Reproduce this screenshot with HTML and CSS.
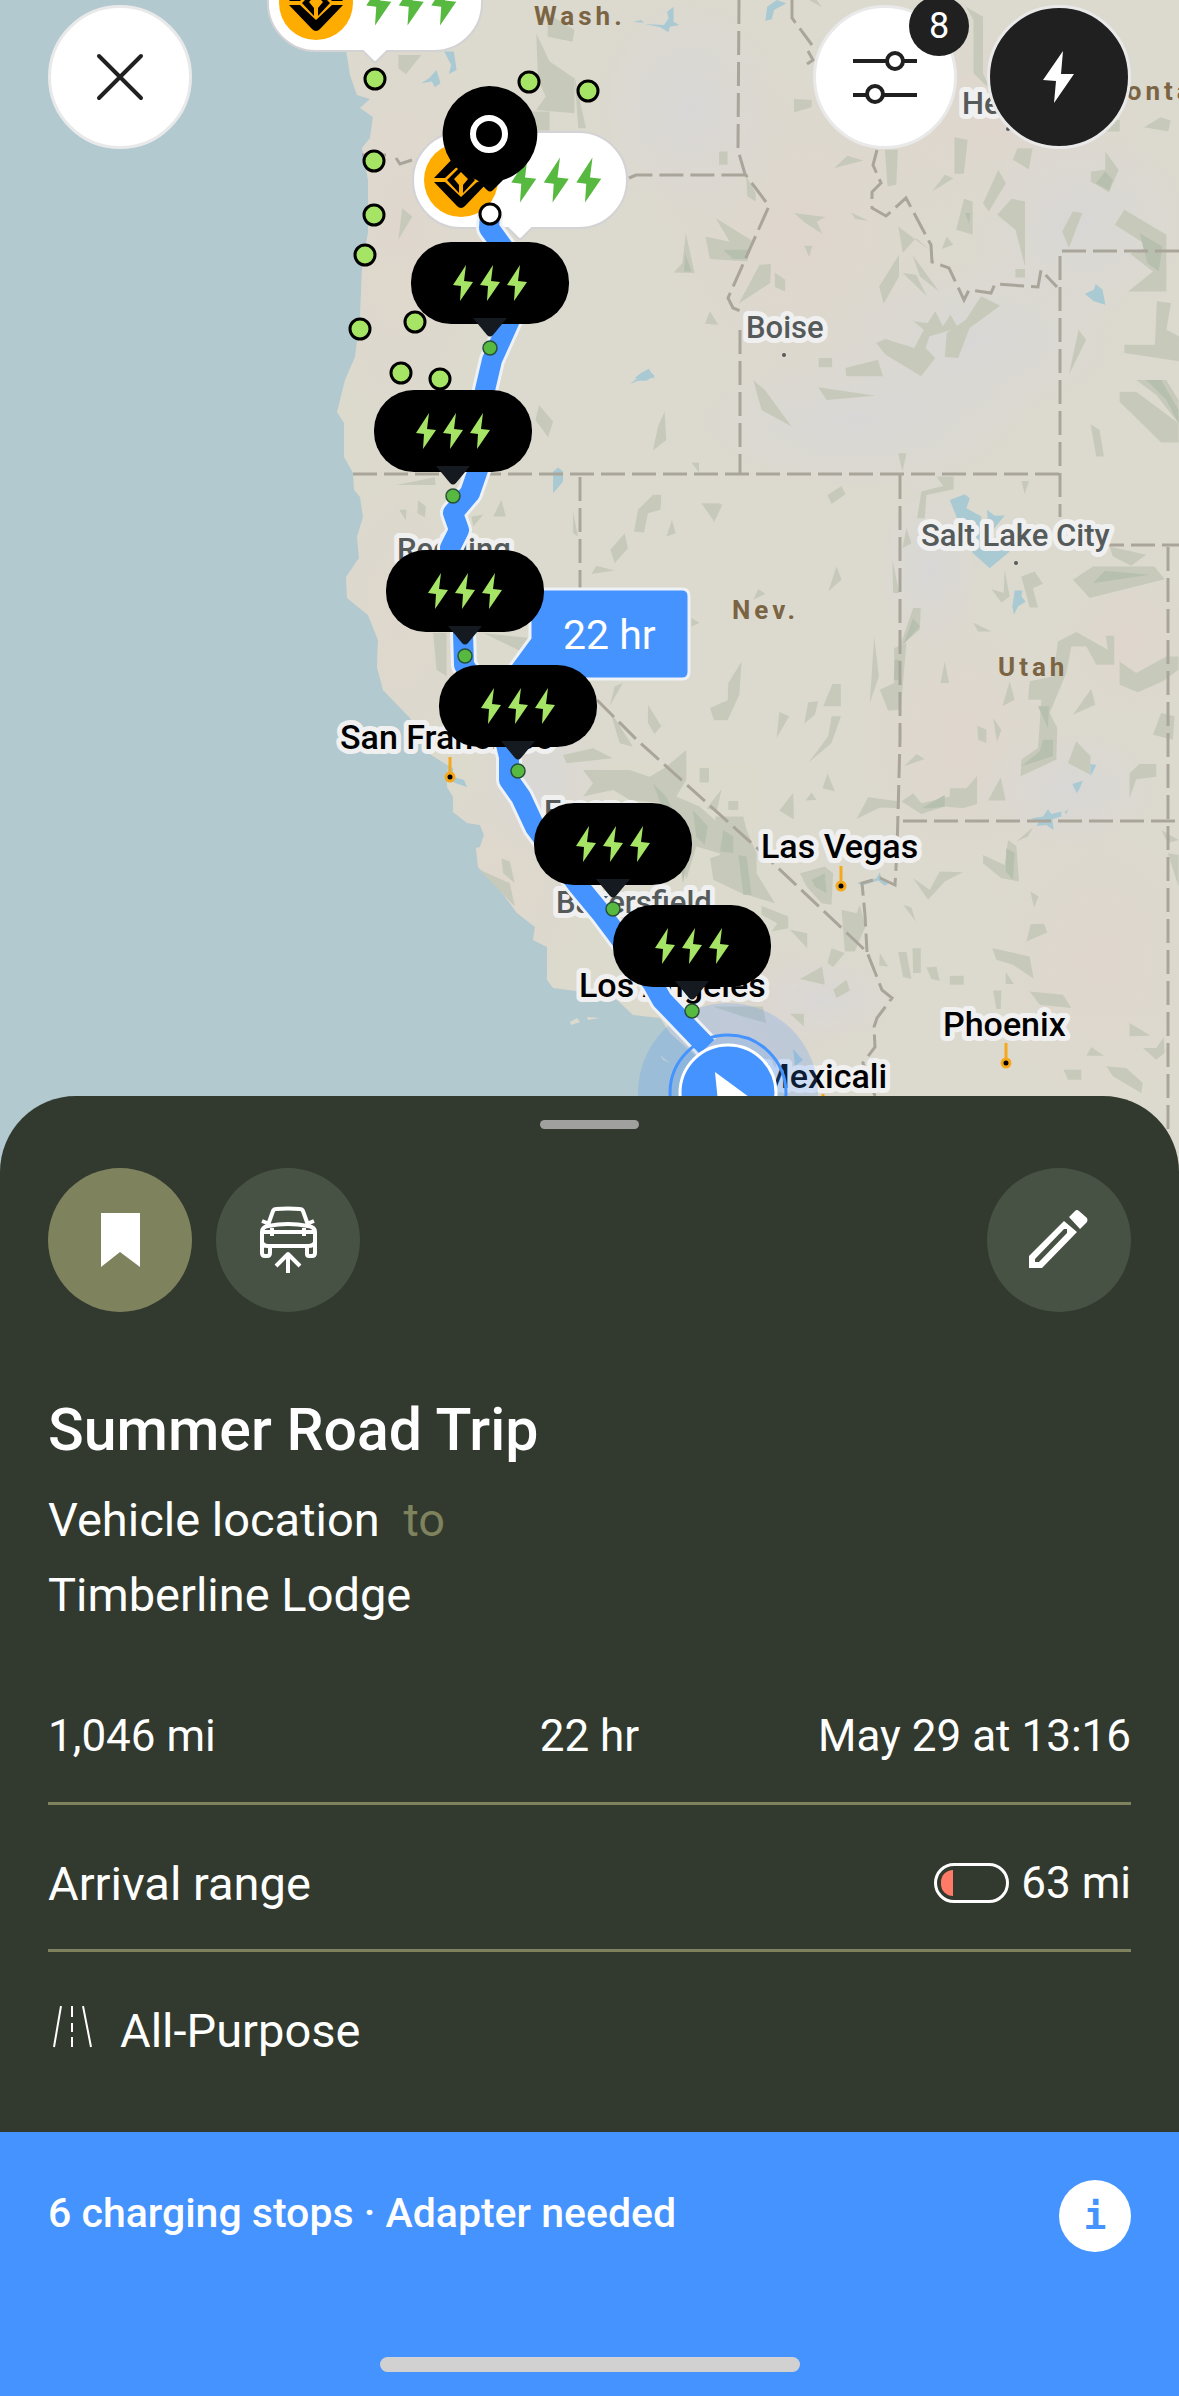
FILE: index.html
```html
<!DOCTYPE html>
<html lang="en">
<head>
    <meta charset="UTF-8">
    <meta name="viewport" content="width=device-width, initial-scale=1.0">
    <title>Summer Road Trip</title>
    <link rel="stylesheet" href="styles.css">
</head>
<body>
    <main class="map-area">
        <svg class="map" viewBox="0 0 1179 1196" preserveAspectRatio="xMidYMin slice" role="img" aria-label="Route map">
            <defs>
                <path id="bolt" d="M3 -18 L-10 2 L-2 3 L-3 18 L10 -1 L1 -2 Z"/>
                <g id="stop">
                    <rect x="-79" y="-106" width="158" height="82" rx="40"/>
                    <path d="M-17 -30 H17 L3 -13 Q0 -10 -3 -13 Z" fill="#141a1f"/>
                    <g fill="#a6e465">
                        <use href="#bolt" x="-27" y="-65"/>
                        <use href="#bolt" y="-65"/>
                        <use href="#bolt" x="27" y="-65"/>
                    </g>
                    <circle r="7" fill="#57b940" stroke="#27503a" stroke-width="1.5"/>
                </g>
                <g id="charger">
                    <path d="M-59 -48 H59 A48 48 0 0 1 59 48 H12 L2 58 Q0 60 -2 58 L-12 48 H-59 A48 48 0 0 1 -59 -48 Z" fill="#fff" stroke="#d3d2d4" stroke-width="2"/>
                    <circle cx="-59" r="37" fill="#ffac00"/>
                    <g transform="translate(-59 0)">
                        <path d="M-27 2 H-16 L0 17 L16 2 H27 L4 26 Q0 30 -4 26 Z M-27 -2 H-16 L0 -17 L16 -2 H27 L4 -26 Q0 -30 -4 -26 Z"/>
                        <path d="M0 -14 L14 0 L2 13 V5 L7 -1 L0 -8 L-7 -1 L-2 5 V13 L-14 0 Z"/>
                    </g>
                    <g fill="#57b940" transform="scale(1.25)">
                        <use href="#bolt" x="3"/>
                        <use href="#bolt" x="29"/>
                        <use href="#bolt" x="55"/>
                    </g>
                </g>
                <path id="coast" d="M340 0 L346 50 L350 75 L357 95 L370 99 L360 108 L373 117 L370 138 L362 148 L368 180 L368 233 L362 267 L360 317 L355 357 L345 380 L337 412 L344 423 L344 457 L353 473 L354 490 L360 497 L363 517 L357 537 L359 558 L346 577 L347 598 L368 615 L378 640 L377 667 L383 690 L410 718 L428 753 L447 765 L447 787 L453 797 L453 812 L467 823 L480 825 L484 835 L480 847 L476 848 L478 867 L500 890 L517 913 L535 927 L533 940 L547 947 L547 980 L553 988 L583 992 L617 1000 L633 1015 L660 1018 L670 1033 L697 1057 L720 1100 L740 1196 H1179 V0 Z"/>
                <clipPath id="on-land"><use href="#coast"/></clipPath>
                <radialGradient id="pink"><stop offset="0" stop-color="#e0d6cd"/><stop offset="1" stop-color="#e0d6cd" stop-opacity="0"/></radialGradient>
                <radialGradient id="lilac"><stop offset="0" stop-color="#d9d7d8"/><stop offset="1" stop-color="#d9d7d8" stop-opacity="0"/></radialGradient>
            </defs>

            <rect width="1179" height="1196" fill="#b2c9cf"/>
            <use class="land" href="#coast"/>
            <path class="land" d="M570 1022 L577 1018 L580 1022 L571 1025 Z M587 1017 L600 1018 L588 1020 Z M660 1055 L670 1063 L663 1060 Z"/>

            <!-- soft ground tints -->
            <g clip-path="url(#on-land)" opacity=".8">
                <g fill="url(#pink)">
                    <ellipse cx="400" cy="230" rx="110" ry="260"/>
                    <ellipse cx="400" cy="620" rx="90" ry="180"/>
                    <ellipse cx="800" cy="230" rx="180" ry="200"/>
                    <ellipse cx="1000" cy="120" rx="180" ry="120"/>
                    <ellipse cx="500" cy="880" rx="110" ry="150"/>
                    <ellipse cx="960" cy="740" rx="130" ry="170"/>
                    <ellipse cx="1100" cy="960" rx="130" ry="170"/>
                    <ellipse cx="760" cy="1010" rx="120" ry="100"/>
                    <ellipse cx="1130" cy="640" rx="90" ry="100"/>
                </g>
                <g fill="url(#lilac)">
                    <ellipse cx="690" cy="110" rx="110" ry="130"/>
                    <ellipse cx="860" cy="420" rx="190" ry="80"/>
                    <ellipse cx="930" cy="570" rx="60" ry="100"/>
                    <ellipse cx="970" cy="340" rx="170" ry="90"/>
                    <ellipse cx="1080" cy="220" rx="130" ry="110"/>
                    <ellipse cx="1070" cy="790" rx="100" ry="70"/>
                    <ellipse cx="540" cy="780" rx="70" ry="80"/>
                    <ellipse cx="820" cy="1000" rx="90" ry="50"/>
                </g>
            </g>

            <!-- hills -->
            <g class="hills">
                <path transform="scale(.383 .333)" d="M1040 165 H1100 L1060 223 L1040 205Z M1400 100 L1435 185 L1500 235 V340 L1400 330 L1425 290 L1405 240Z M1430 40 L1500 90 L1495 125 L1430 110Z M1500 230 L1530 385 H1510Z M1050 625 L1077 650 L1040 720Z M1380 335 H1435 V392 H1370Z"/>
                <path transform="translate(580 0) scale(.382 .333)" d="M560 297 L607 300 L606 322 L560 338Z M665 505 L700 468 L742 482Z M364 455 H386 V495 H364Z M435 528 L460 580 V605 L438 590Z M355 655 L450 722 L438 785 L340 778 L328 710 L392 726Z M277 700 L300 820 L245 818 L268 790Z M415 912 L470 795 L500 793 L498 850Z M510 818 L537 840 V875 L510 862Z M340 935 L362 975 L327 972Z M980 412 L1015 420 L1005 522 H980Z M798 450 H832 L828 555 L805 560Z M922 575 L955 525 L978 535Z M1095 510 L1115 550 L1070 635 L1055 610Z M1005 597 L1028 605 V705 L985 690Z M1130 597 L1165 605 V800 L1140 690 L1092 645Z M1375 455 L1410 510 L1385 577 L1337 545 L1338 515 L1375 510Z M1477 382 L1520 352 L1546 362 L1540 395Z M1290 635 L1315 640 L1280 745 L1262 695Z M1425 630 L1535 705 V875 H1435 L1500 815 L1440 762 L1490 740 L1400 675Z M833 680 L920 755 L880 715 L845 760Z M835 765 V830 L795 912 L783 860Z M870 765 L940 875 L890 830Z M845 820 L908 890 L880 825Z M560 640 L643 652 L620 665 L634 702 L590 670Z M710 638 L755 663 L720 658Z M587 738 H608 L600 772Z M960 710 L977 735 L947 748Z M1050 890 L1100 918 L1020 985 L990 1075 L955 1072 L960 1000 L1010 960Z M775 1030 L800 1018 L875 1045 L900 990 L873 965 L910 970 L930 935 L950 980 L970 945 L990 985 L915 1010 L905 1045 L930 1075 L893 1130 L800 1065Z M1305 990 L1325 1020 L1280 1125Z M1510 905 L1547 910 L1535 990 L1568 1010 V1085 L1425 1060 V1035 H1505Z M1010 20 L1055 50 V220 L1075 270 L1030 220 V60Z M625 1075 H660 V1103 H625Z M695 1105 L780 1080 L793 1130 H697Z M1140 808 H1165 V833 H1140Z M1365 360 H1413 V395 H1365Z M1145 445 H1185 L1175 508 L1133 480Z M600 0 L633 22 L620 0Z"/>
                <path transform="translate(300 360) scale(.333)" d="M718 135 L760 185 L745 232 L707 180Z M1095 155 L1100 240 L1060 272 L1075 200Z M1060 405 H1085 L1083 450 L1045 460 L1033 518 L1003 515 L1015 450Z M1117 480 L1128 520 L1100 530Z M975 520 L985 565 L945 610 L932 570Z M875 643 L890 618 L945 632Z M605 420 L618 470 H580Z M298 450 H320 L318 482Z M355 422 L378 440 L375 472 L352 460Z M288 375 L405 352 L407 375Z M1175 308 H1198 V338Z M820 455 L835 530 L820 520Z M400 820 H440 V950 L410 930Z M515 470 L550 465 L520 500Z M550 820 L688 835 L660 873Z M1045 1035 L1085 1100 L1065 1123 L1045 1090Z M970 970 L930 1040 L945 980Z M1205 430 H1260 L1240 480Z M1175 775 L1200 790 L1175 800Z"/>
                <path transform="translate(700 380) scale(.333)" d="M160 0 L195 30 L275 140 L185 90Z M355 22 L527 47 L380 60Z M1260 35 H1310 L1437 130 V188 H1385 L1260 65Z M1310 0 H1400 L1437 60 V130 L1370 45Z M1173 133 L1200 150 L1213 230 H1190Z M595 220 H620 L608 275Z M710 290 H762 V328 L680 345 L675 415 H652 L665 335 L730 318Z M965 303 H988 L975 342Z M383 345 L425 318 L437 343 L395 372Z M28 373 H68 L42 428Z M620 445 L635 490 L608 505Z M1230 500 L1340 525 L1295 558 L1240 530Z M1120 600 L1180 560 H1365 L1395 598 L1170 655Z M410 560 L425 600 L385 635Z M578 540 L598 640 H580Z M160 660 L175 628 L197 642Z M640 685 H663 L660 750 L600 800Z M820 728 L875 755 H835Z M125 845 L118 945 L83 1022 H42 L30 985 L83 962 L85 910Z M398 913 H423 V980 H370Z M325 968 L355 965 L345 1005 L313 1032Z M238 997 L268 1010 L230 1075Z M395 1010 H423 L395 1090 L325 1150 L385 1070Z M523 770 L537 890 L510 970Z M583 805 L620 790 L603 990 L565 993 L540 930 L583 910Z M735 845 L748 910 H722Z M1130 757 L1225 810 L1218 768 H1244 V855 H1190 L1160 800 H1115 L1100 880 L1050 1000 L1073 1045 L1070 1140 L963 1190 L965 1140 L1015 1105 L1025 960 H985 L990 905 L1060 890 L1075 785Z M1260 845 L1310 880 L1400 830 H1437 V870 L1390 905 L1315 938 L1260 915Z M1175 927 L1187 975 L1120 1005Z M1385 1000 L1425 1010 L1420 1080 L1360 1065Z M1130 1085 L1173 1130 L1170 1185 L1105 1150Z M613 1160 L650 1123 L675 1138Z M833 1038 L860 1050 V1090 L835 1080Z M880 1015 L905 1050 L892 1088Z M965 590 L1005 575 L1030 612 L1000 625 L1015 683 H990Z M915 570 L930 650 L905 668 L875 628 L912 640Z M930 905 L945 960 L908 980Z"/>
                <path transform="translate(300 740) scale(.333)" d="M790 45 L880 25 L940 55 L800 70Z M850 90 H990 L1050 110 L1100 80 L1160 30 V120 L1130 170 L1200 200 L1290 280 L1300 340 H1260 L1190 320 L1160 420 L1130 300 L1100 190 L990 180 L940 150 L850 170 L880 130Z M1200 85 H1227 V128 H1200Z M1480 160 L1482 238 L1440 212Z M605 355 L630 365 L645 430 L610 400Z M540 390 L630 430 L645 500Z M930 -90 L1000 20 L960 10Z M1240 800 L1390 800 L1400 850 L1330 830Z"/>
                <path transform="translate(700 740) scale(.333)" d="M0 85 H27 V125 H0Z M280 160 L282 238 L240 212Z M383 100 L405 155 L368 145Z M335 158 L350 180 L317 182Z M65 148 L50 215 L20 205Z M85 183 H115 V210 H85Z M505 172 L600 185 V205 L540 203 L470 237Z M640 160 L665 190 L750 170 V145 H800 L832 108 V192 L790 205 L735 200 L665 222 L605 185Z M903 112 L918 182 H865Z M1290 100 L1320 72 H1370 V110 L1310 118 L1290 175Z M45 230 H130 L140 270 L170 340 V400 L225 490 L125 460 L40 420 L30 355 L60 345Z M300 400 L375 380 L400 400 L395 495 L365 490 L320 440Z M925 300 L950 318 L958 425 L905 415 L850 370 V345 L915 375Z M1000 262 L985 290 L950 305Z M640 415 L690 450 L720 395 L790 397 L735 425 L685 480Z M610 495 L635 503 L648 545Z M992 455 L1017 470 L1003 503Z M993 553 L1033 552 L1043 578 L980 605Z M425 510 L470 520 L480 495 L497 560 L465 635 H435Z M185 498 L265 530 V565 L215 575 L232 550 L185 525Z M270 570 L322 580 V625Z M395 625 L435 640 L400 682 L383 670Z M367 680 L375 735 L300 718Z M440 720 L450 752 L410 775 L400 750Z M595 637 H620 L635 718 L610 712Z M638 625 H663 V700 H640Z M680 683 L710 680 L720 723 L695 718Z M750 708 H792 V735 H750Z M540 640 L565 680 L538 678Z M878 625 L990 650 L1002 717 L940 675 L890 660Z M990 755 L1090 765 L1115 805 L1020 795Z M880 752 H905 L903 808 H890Z M918 697 L943 733 H918Z M1290 850 L1353 888 L1290 890Z M1175 922 L1213 948 H1160Z M1393 893 L1395 940 L1370 960 L1330 925 H1370Z M1092 990 H1145 V1020 H1105Z M1220 980 L1280 985 L1330 1030 L1325 1060 L1240 1010Z M1385 270 L1437 300 L1405 310Z M1405 340 L1437 345 V440Z M270 822 H312 V860Z"/>
            </g>
            <g class="hills dark">
                <path transform="translate(580 0) scale(.382 .333)" d="M375 750 H440 L435 778 H400Z M275 760 L292 815 H272Z M1375 515 L1395 540 L1385 572 L1350 550Z M1465 700 L1525 740 L1515 815 L1485 790Z M1008 640 L1022 640 L1018 672Z"/>
                <path transform="translate(700 380) scale(.333)" d="M1180 610 L1215 573 L1350 585Z M1340 0 H1385 L1437 90 V130 L1400 60Z M1030 1080 H1060 V1130 L965 1160 L1020 1115Z M640 715 L660 740 L610 795Z M585 840 L600 840 L598 900 H582Z M1015 980 L1048 980 L1045 1045Z"/>
                <path transform="translate(700 740) scale(.333)" d="M115 345 L140 350 L155 465 L130 465Z M335 420 L375 400 L380 460 L345 440Z M920 325 L945 340 L940 420 L918 395Z M665 205 L735 165 V200 L700 205Z M70 270 L100 290 V340 L60 335Z"/>
                <path transform="translate(300 740) scale(.333)" d="M1060 130 L1100 170 L1130 230 L1090 210Z M1180 210 L1225 260 L1215 315 L1190 290Z M1140 350 L1165 350 L1150 430Z"/>
            </g>

            <g class="lakes">
                <path transform="scale(.383 .333)" d="M1160 155 H1185 L1192 210 L1172 222 L1178 195Z M1100 250 L1120 235 L1140 210 L1150 250 L1135 262 L1128 245Z"/>
                <path transform="translate(580 0) scale(.382 .333)" d="M485 62 L490 20 L515 0 L540 10 L508 30 L502 58Z M1322 882 L1345 870 L1350 853 L1368 870 L1375 915 L1345 905Z M143 1135 L160 1120 L180 1107 L195 1135Z M170 72 L220 75 L232 55 L228 35 L245 20 L245 65 L260 75 L235 80 L232 97 L210 82Z M140 66 L160 60 L168 68Z"/>
                <path transform="translate(300 360) scale(.333)" d="M760 335 L775 323 L790 335 V365 L760 400Z M992 72 L1020 48 L1047 30 L1065 48 L1040 62 L1015 62Z"/>
                <path transform="translate(700 380) scale(.333)" d="M750 360 L795 343 L810 355 L800 385 L845 410 L840 450 L930 515 L870 565 L820 520 L770 410Z M862 390 L885 408 L915 407 L880 450 L865 430Z M945 632 L968 632 L965 650 L978 665 L955 680 L943 705 L938 680Z"/>
                <path transform="translate(700 740) scale(.333)" d="M992 236 L1030 230 L1045 208 L1055 222 L1085 215 L1085 230 L1058 238 L1062 270 L1040 255 L1010 258 L1020 243Z M1118 132 L1150 122 L1140 145 L1132 160Z M1095 218 L1106 206 L1100 222Z M1172 72 L1190 75 L1180 95 L1172 108Z M472 428 L500 425 L530 415 L540 398 L545 415 L565 432 L555 438 L535 422 L485 438Z"/>
                <path d="M447 765 L453 768 L453 777 L464 780 L467 787 L455 783 L448 778 Z M793 1049 L803 1060 L795 1066 Z"/>
            </g>

            <!-- state borders -->
            <path class="border" d="M362 155 H390 M396 158 L400 164 L412 160 M629 178 L636 175 H745 M739 0 L738 150 L745 174 L769 206 L728 298 L733 308 L745 313 M740 330 V473 M792 0 V18 L812 45 M808 51 L813 60 L807 64 M877 150 L873 165 L881 183 L872 192 V208 L886 216 L906 198 L931 245 L932 262 L949 268 L964 300 L969 290 L991 293 L995 284 L1038 287 L1041 270 L1057 287 M1179 251 H1060 V517 M1100 545 H1179 M1168 547 V1196 M353 474 H1060 M580 477 V590 M597 700 L637 740 L757 848 L867 952 L882 990 L892 998 L877 1018 L874 1027 L875 1047 L863 1063 L875 1096 M900 475 V740 L897 850 L895 885 L880 878 L862 883 L865 915 L867 952 M903 821 H1179"/>

            <!-- place names -->
            <g class="label state">
                <text x="534" y="25">Wash.</text>
                <text x="1100" y="100">Montana</text>
                <text x="732" y="619">Nev.</text>
                <text x="998" y="676">Utah</text>
            </g>
            <g class="label town">
                <text x="962" y="114">Helena</text>
                <text x="746" y="338">Boise</text>
                <text x="921" y="546">Salt Lake City</text>
                <text x="397" y="560">Redding</text>
                <text x="544" y="822">Fresno</text>
                <text x="556" y="913">Bakersfield</text>
            </g>
            <g fill="#555a5a">
                <circle cx="1008" cy="129" r="2"/>
                <circle cx="784" cy="355" r="2"/>
                <circle cx="1016" cy="563" r="2"/>
            </g>
            <g class="label city">
                <text x="340" y="749">San Francisco</text>
                <text x="761" y="858">Las Vegas</text>
                <text x="579" y="997">Los Angeles</text>
                <text x="943" y="1036">Phoenix</text>
                <text x="760" y="1088">Mexicali</text>
            </g>
            <g class="city-mark">
                <path d="M450 757 V774 M841 866 V882 M1006 1043 V1060 M823 1094 V1110"/>
                <circle cx="450" cy="777" r="4"/>
                <circle cx="841" cy="886" r="4"/>
                <circle cx="1006" cy="1063" r="4"/>
            </g>

            <!-- chargers off the route -->
            <use href="#charger" x="375" y="3"/>
            <use href="#charger" x="520" y="180"/>
            <g class="charger-dot">
                <circle cx="375" cy="79" r="10"/>
                <circle cx="529" cy="82" r="10"/>
                <circle cx="588" cy="91" r="10"/>
                <circle cx="374" cy="161" r="10"/>
                <circle cx="374" cy="215" r="10"/>
                <circle cx="365" cy="255" r="10"/>
                <circle cx="360" cy="329" r="10"/>
                <circle cx="415" cy="322" r="10"/>
                <circle cx="401" cy="373" r="10"/>
                <circle cx="440" cy="379" r="10"/>
            </g>

            <circle cx="728" cy="1093" r="90" fill="#4493ff" opacity=".2"/>

            <!-- route -->
            <path id="route" class="route-edge" d="M490 214 L489 228 L505 250 L510 320 L492 360 L485 390 L478 470 L470 493 L453 513 L459 530 L450 548 L462 600 L464 665 L500 720 L509 757 L509 780 L521 797 L535 827 L577 884 L601 913 L616 933 L653 984 L662 1000 L707 1047"/>
            <use class="route" href="#route"/>
            <path d="M530 589 H682 Q689 589 689 596 V672 Q689 679 682 679 H500 L530 638 Z" fill="#4493ff" stroke="#eef1f5" stroke-width="3"/>
            <text class="duration" x="563" y="649">22 hr</text>

            <!-- vehicle -->
            <circle cx="728" cy="1093" r="58" fill="#4493ff" fill-opacity=".15" stroke="#4493ff" stroke-width="3"/>
            <circle cx="728" cy="1093" r="48" fill="#4493ff" stroke="#fff" stroke-width="3"/>
            <path d="M715 1072 L764 1108 L719 1112 Z" fill="#fff"/>

            <!-- destination -->
            <path d="M489 86 A48 48 0 0 1 503 180 L493 190 Q490 193 487 190 L477 180 A48 48 0 0 1 489 86 Z"/>
            <circle cx="489" cy="134" r="16" fill="none" stroke="#fff" stroke-width="6"/>
            <circle cx="490" cy="214" r="10" fill="#fff" stroke="#000" stroke-width="3"/>

            <use href="#stop" x="490" y="348"/>
            <use href="#stop" x="453" y="496"/>
            <use href="#stop" x="465" y="656"/>
            <use href="#stop" x="518" y="771"/>
            <use href="#stop" x="613" y="909"/>
            <use href="#stop" x="692" y="1011"/>
        </svg>

        <div class="toolbar">
            <button class="round light" aria-label="Close">
                <svg viewBox="-72 -72 144 144"><path d="M-21 -21 L21 21 M21 -21 L-21 21" stroke="#202020" stroke-width="4" stroke-linecap="round"/></svg>
            </button>
            <div class="toolbar-right">
                <button class="round light" aria-label="Filters">
                    <svg viewBox="-72 -72 144 144">
                        <g fill="#fff" stroke="#202020" stroke-width="4">
                            <path d="M-32 -16 H32 M-32 18 H32"/>
                            <circle cx="10" cy="-16" r="8"/>
                            <circle cx="-10" cy="17" r="8"/>
                        </g>
                    </svg>
                    <span class="badge">8</span>
                </button>
                <button class="round black" aria-label="Chargers">
                    <svg viewBox="-72 -72 144 144"><path d="M4 -26 L-16 3 L-3 4 L-5 26 L15 -3 L2 -3 Z" fill="#fff"/></svg>
                </button>
            </div>
        </div>
    </main>

    <section class="sheet">
        <div class="handle"></div>
        <div class="actions">
            <button class="round olive" aria-label="Saved trip">
                <svg viewBox="-72 -72 144 144"><path d="M-19 -27 H20 V27 L0 12 L-19 27 Z" fill="#fff"/></svg>
            </button>
            <button class="round green" aria-label="Send to vehicle">
                <svg viewBox="-72 -72 144 144">
                    <g fill="none" stroke="#fff" stroke-width="4" stroke-linejoin="round">
                        <path d="M-20 -15 L-15 -29 Q-14 -31 -12 -31 Q0 -32 12 -31 Q14 -31 15 -29 L20 -15"/>
                        <path d="M-26 13 V-8 Q-26 -13 -20 -14 Q0 -18 20 -14 Q27 -13 27 -8 V13 Q27 16 24 16 H21 Q19 16 19 14 V7 M-26 13 Q-26 16 -23 16 H-21 Q-18 16 -18 13 V7 M-26 2 Q-25 6 -20 6 H20 Q26 6 27 2 M-26 -8 H27 M-16 -12 V-4 M16 -12 V-4 M-26 -19 L-21 -17 M26 -19 L21 -17"/>
                        <path d="M0 33 V14 M-12 26 L0 14 L12 26"/>
                    </g>
                </svg>
            </button>
            <button class="round green edit" aria-label="Edit trip">
                <svg viewBox="-72 -72 144 144">
                    <path d="M-30 16 L5 -19 L18 -8 L-17 28 H-30 Z M-24 19 V22 H-20 L8 -7 V-11 H5 Z" fill="#fff" fill-rule="evenodd"/>
                    <path d="M10 -23 L16 -29 Q18 -31 20 -29 L28 -22 Q29 -20 28 -18 L21 -11 Z" fill="#fff"/>
                </svg>
            </button>
        </div>

        <h1>Summer Road Trip</h1>
        <p class="places">Vehicle location <span class="to">to</span><br>Timberline Lodge</p>

        <div class="row stats">
            <span>1,046 mi</span>
            <span>22 hr</span>
            <span>May 29 at 13:16</span>
        </div>
        <div class="row">
            <span>Arrival range</span>
            <span class="range">
                <span class="battery"><span class="charge"></span></span>
                <span class="range-value">63 mi</span>
            </span>
        </div>
        <div class="row mode">
            <svg class="road" viewBox="0 0 48 48" fill="none" stroke="#fff" stroke-width="2">
                <path d="M13 0 L6 41 M35 0 L43 41 M24 0 V11 M24 17 V26 M24 31 V41"/>
            </svg>
            <span>All-Purpose</span>
        </div>
    </section>

    <footer class="summary">
        <div class="summary-row">
            <span>6 charging stops · Adapter needed</span>
            <button class="info" aria-label="Trip information">i</button>
        </div>
        <div class="home-bar"></div>
    </footer>
</body>
</html>
```
FILE: styles.css
```css
* {
    box-sizing: border-box;
}
body {
    display: flex;
    flex-direction: column;
    min-height: 100vh;
    margin: 0;
    background-color: #4493ff;
    color: #fff;
    font-family: Roboto, "Liberation Sans", sans-serif;
    font-size: 47px;
}
button {
    padding: 0;
    border: none;
    font-family: inherit;
    cursor: pointer;
}

/* Map */
.map-area {
    position: relative;
}
.map {
    display: block;
    width: 100%;
    height: 1196px;
}
.land {
    fill: #dcdace;
}
.hills {
    fill: #c7cabb;
}
.hills.dark {
    fill: #b7c0af;
}
.lakes {
    fill: #a9c9d3;
}
.border {
    fill: none;
    stroke: #a9a59a;
    stroke-width: 3;
    stroke-dasharray: 24 7;
}
.label {
    font-weight: 500;
    stroke: #f0f0f0;
    stroke-width: 10px;
    stroke-linejoin: round;
    paint-order: stroke;
}
.state {
    fill: #7b6443;
    stroke: none;
    font-size: 26px;
    font-weight: 700;
    letter-spacing: 4px;
}
.town {
    fill: #555a5a;
    font-size: 31px;
}
.city {
    fill: #000;
    font-size: 34px;
}
.city-mark {
    fill: #000;
    stroke: #f5a81c;
    stroke-width: 3;
}
.charger-dot {
    fill: #a6e465;
    stroke: #000;
    stroke-width: 3;
}
.route-edge {
    fill: none;
    stroke-linejoin: round;
    stroke: var(--line, #eef1f5);
    stroke-width: var(--line-width, 26px);
}
.route {
    --line: #4493ff;
    --line-width: 20px;
}
.duration {
    fill: #fff;
    font-size: 41px;
}

/* Round buttons */
.round {
    position: relative;
    width: 144px;
    height: 144px;
    border-radius: 50%;
}
.round svg {
    display: block;
    width: 144px;
    height: 144px;
}
.light,
.black {
    border: 3px solid #e9e9ea;
}
.light svg,
.black svg {
    margin: -3px;
}
.light {
    background-color: #fff;
}
.black {
    background-color: #202020;
}
.olive {
    background-color: #7e825d;
}
.green {
    background-color: #475144;
}
.toolbar {
    position: absolute;
    top: 5px;
    left: 48px;
    right: 48px;
    display: flex;
    justify-content: space-between;
}
.toolbar-right {
    display: flex;
    gap: 30px;
}
.badge {
    position: absolute;
    top: -12px;
    right: -15px;
    width: 60px;
    height: 60px;
    border-radius: 50%;
    background-color: #202020;
    color: #fff;
    font-size: 36px;
    line-height: 60px;
}

/* Trip sheet */
.sheet {
    position: relative;
    margin-top: -100px;
    padding: 24px 48px 33px;
    border-radius: 76px 76px 0 0;
    background-color: #32392e;
}
.handle {
    width: 99px;
    height: 9px;
    margin: 0 auto;
    border-radius: 5px;
    background-color: #a0a09f;
}
.actions {
    display: flex;
    gap: 24px;
    margin-top: 39px;
}
.edit {
    margin-left: auto;
}
h1 {
    margin: 82px 0 0;
    font-size: 59px;
    font-weight: 500;
    line-height: 72px;
}
.places {
    margin: 16px 0 26px;
    line-height: 75px;
}
.to {
    margin-left: 12px;
    color: #7e825d;
}
.row {
    display: flex;
    align-items: center;
    justify-content: space-between;
    height: 147px;
    padding-top: 12px;
    border-bottom: 3px solid #7e825d;
}
.stats {
    display: grid;
    grid-template-columns: 1fr auto 1fr;
    font-size: 44px;
}
.stats span:last-child {
    text-align: right;
}
.range {
    display: flex;
    align-items: center;
    gap: 12px;
}
.range-value {
    font-size: 44px;
}
.battery {
    width: 75px;
    height: 40px;
    padding: 4px;
    border: 3px solid #fff;
    border-radius: 20px;
}
.charge {
    display: block;
    width: 12px;
    height: 26px;
    border-radius: 12px 0 0 12px;
    background-color: #ff7b67;
}
.mode {
    justify-content: flex-start;
    gap: 24px;
    height: 144px;
    margin-bottom: 3px;
    border-bottom: none;
}
.road {
    width: 48px;
    height: 48px;
}

/* Charging summary */
.summary {
    display: flex;
    flex: 1;
    flex-direction: column;
    justify-content: space-between;
    padding: 48px 48px 24px;
    background-color: #4493ff;
    font-size: 41px;
    font-weight: 500;
}
.summary-row {
    display: flex;
    align-items: flex-start;
    justify-content: space-between;
    line-height: 66px;
}
.info {
    width: 72px;
    height: 72px;
    border-radius: 50%;
    background-color: #fff;
    color: #4493ff;
    font-family: "DejaVu Sans Mono", monospace;
    font-size: 38px;
    font-weight: 700;
}
.home-bar {
    width: 420px;
    height: 15px;
    margin: 0 auto;
    border-radius: 8px;
    background-color: #d1d1d1;
}
```
